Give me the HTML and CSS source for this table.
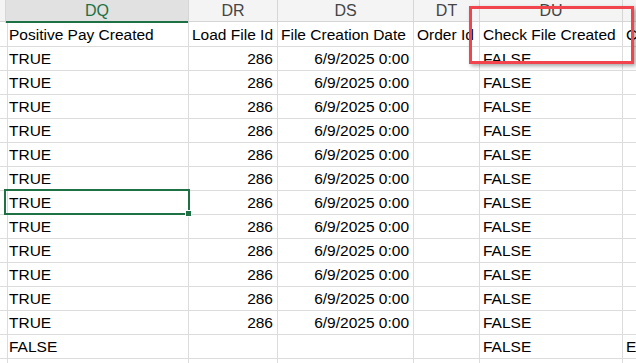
FILE: index.html
```html
<!DOCTYPE html>
<html>
<head>
<meta charset="utf-8">
<link rel="stylesheet" href="styles.css">
</head>
<body>
<div class="sheet">
  <div class="grid">
    <div class="hd"></div>
    <div class="hd sel">DQ</div>
    <div class="hd">DR</div>
    <div class="hd">DS</div>
    <div class="hd">DT</div>
    <div class="hd">DU</div>
    <div class="hd last"></div>

    <div class="c"></div><div class="c">Positive Pay Created</div><div class="c">Load File Id</div><div class="c">File Creation Date</div><div class="c">Order Id</div><div class="c">Check File Created</div><div class="c">Check Number</div>

    <div class="c"></div><div class="c">TRUE</div><div class="c r">286</div><div class="c r">6/9/2025 0:00</div><div class="c"></div><div class="c">FALSE</div><div class="c"></div>
    <div class="c"></div><div class="c">TRUE</div><div class="c r">286</div><div class="c r">6/9/2025 0:00</div><div class="c"></div><div class="c">FALSE</div><div class="c"></div>
    <div class="c"></div><div class="c">TRUE</div><div class="c r">286</div><div class="c r">6/9/2025 0:00</div><div class="c"></div><div class="c">FALSE</div><div class="c"></div>
    <div class="c"></div><div class="c">TRUE</div><div class="c r">286</div><div class="c r">6/9/2025 0:00</div><div class="c"></div><div class="c">FALSE</div><div class="c"></div>
    <div class="c"></div><div class="c">TRUE</div><div class="c r">286</div><div class="c r">6/9/2025 0:00</div><div class="c"></div><div class="c">FALSE</div><div class="c"></div>
    <div class="c"></div><div class="c">TRUE</div><div class="c r">286</div><div class="c r">6/9/2025 0:00</div><div class="c"></div><div class="c">FALSE</div><div class="c"></div>
    <div class="c"></div><div class="c active">TRUE</div><div class="c r">286</div><div class="c r">6/9/2025 0:00</div><div class="c"></div><div class="c">FALSE</div><div class="c"></div>
    <div class="c"></div><div class="c">TRUE</div><div class="c r">286</div><div class="c r">6/9/2025 0:00</div><div class="c"></div><div class="c">FALSE</div><div class="c"></div>
    <div class="c"></div><div class="c">TRUE</div><div class="c r">286</div><div class="c r">6/9/2025 0:00</div><div class="c"></div><div class="c">FALSE</div><div class="c"></div>
    <div class="c"></div><div class="c">TRUE</div><div class="c r">286</div><div class="c r">6/9/2025 0:00</div><div class="c"></div><div class="c">FALSE</div><div class="c"></div>
    <div class="c"></div><div class="c">TRUE</div><div class="c r">286</div><div class="c r">6/9/2025 0:00</div><div class="c"></div><div class="c">FALSE</div><div class="c"></div>
    <div class="c"></div><div class="c">TRUE</div><div class="c r">286</div><div class="c r">6/9/2025 0:00</div><div class="c"></div><div class="c">FALSE</div><div class="c"></div>
    <div class="c"></div><div class="c">FALSE</div><div class="c"></div><div class="c"></div><div class="c"></div><div class="c">FALSE</div><div class="c">ERROR</div>
    <div class="c"></div><div class="c"></div><div class="c"></div><div class="c"></div><div class="c"></div><div class="c"></div><div class="c"></div>
  </div>
  <div class="callout"></div>
</div>
</body>
</html>
```

FILE: styles.css
```css
html, body {
  margin: 0;
  padding: 0;
  background: #ffffff;
}

.sheet {
  position: relative;
  width: 636px;
  height: 363px;
  overflow: hidden;
  font-family: "Liberation Sans", Arial, sans-serif;
  font-size: 15.5px;
  color: #000;
}

.grid {
  display: grid;
  grid-template-columns: 6px 183px 89px 136px 66px 143px 60px;
  grid-auto-rows: 24px;
  grid-template-rows: 23px;
}

.hd {
  box-sizing: border-box;
  height: 23px;
  line-height: 22px;
  font-size: 16px;
  text-align: center;
  color: #454545;
  border-right: 1px solid #d6d6d6;
  background: linear-gradient(#f4f4f4 0 21px, #d6d6d6 21px 22px, #ffffff 22px);
  white-space: nowrap;
  overflow: hidden;
}

.hd.sel {
  color: #1e7145;
  background: linear-gradient(#e1e1e1 0 21px, #1e7145 21px);
}

.hd.last {
  border-right: none;
}

.c {
  position: relative;
  box-sizing: border-box;
  height: 24px;
  padding: 1px 4px 0 3px;
  line-height: 22px;
  border-right: 1px solid #dcdcdc;
  border-bottom: 1px solid #dcdcdc;
  white-space: nowrap;
  overflow: hidden;
}

.c.r {
  text-align: right;
}

.c.active {
  overflow: visible;
  z-index: 2;
}

.c.active::after {
  content: "";
  position: absolute;
  left: -2px;
  right: -2px;
  top: -2px;
  bottom: -1px;
  border: 2px solid #1e7145;
}

.c.active::before {
  content: "";
  position: absolute;
  right: -3px;
  bottom: -2px;
  width: 5px;
  height: 5px;
  background: #1e7145;
  box-shadow: 0 0 0 1px #ffffff;
  z-index: 3;
}

.callout {
  position: absolute;
  left: 469px;
  top: 6px;
  width: 165px;
  height: 58px;
  box-sizing: border-box;
  border: 3px solid #f2444c;
  box-shadow: 2px 2px 4px rgba(0, 0, 0, 0.35);
  z-index: 5;
}
```
